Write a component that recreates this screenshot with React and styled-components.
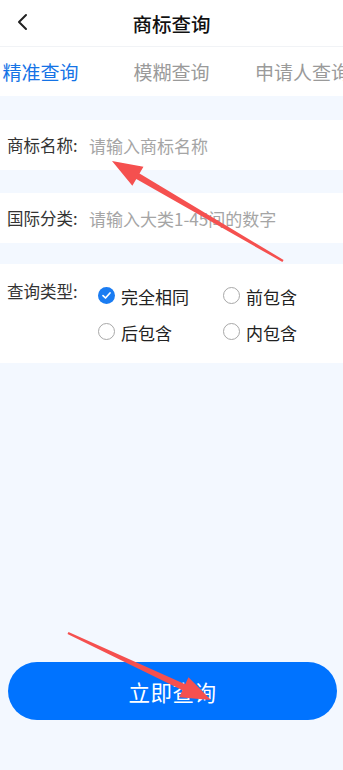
import React, { useState } from "react";
import styled, { createGlobalStyle } from "styled-components";

const GlobalStyle = createGlobalStyle`
  html, body {
    margin: 0;
    padding: 0;
    background: #f3f8ff;
    font-family: "Noto Sans CJK SC", "Noto Sans", sans-serif;
  }
`;

const Page = styled.div`
  position: relative;
  width: 343px;
  height: 770px;
  overflow: hidden;
  background: #f3f8ff;
  display: flex;
  flex-direction: column;
`;

const Header = styled.div`
  height: 46px;
  background: #fff;
  display: flex;
  align-items: center;
  justify-content: center;
  position: relative;
  border-bottom: 1px solid #f1f3f6;
`;

const Back = styled.div`
  position: absolute;
  left: 14px;
  top: 11px;
  width: 20px;
  height: 22px;
`;

const Title = styled.div`
  font-size: 19.5px;
  color: #111;
  font-weight: 500;
`;

const Tabs = styled.div`
  height: 49px;
  background: #fff;
  display: flex;
  overflow: hidden;
  margin-bottom: 24px;
`;

const TabTrack = styled.div`
  display: flex;
  margin-left: -25px;
`;

const Tab = styled.div`
  flex-shrink: 0;
  width: 131px;
  display: flex;
  align-items: center;
  justify-content: center;
  font-size: 19px;
  white-space: nowrap;
  color: ${(p) => (p.active ? "#1473e6" : "#9a9a9a")};
`;

const Row = styled.div`
  background: #fff;
  display: flex;
  align-items: ${(p) => (p.top ? "flex-start" : "center")};
  padding: ${(p) => (p.top ? "15px 0 18px 7px" : "0 0 0 7px")};
  height: ${(p) => (p.top ? "auto" : "50px")};
  margin-bottom: ${(p) => p.gap || 0}px;
`;

const Label = styled.div`
  font-size: 16.5px;
  color: #333;
  white-space: nowrap;
  width: 82px;
  flex-shrink: 0;
`;

const Input = styled.input`
  border: none;
  outline: none;
  background: transparent;
  font-family: inherit;
  font-size: 17px;
  color: #333;
  padding: 0;
  width: 250px;
  &::placeholder {
    color: #a5a5a5;
  }
`;

const Options = styled.div`
  display: grid;
  grid-template-columns: 125px 100px;
  row-gap: 11px;
  margin-left: 9px;
  margin-top: 5px;
`;

const Option = styled.div`
  display: flex;
  align-items: center;
  gap: 6px;
  font-size: 17px;
  color: #222;
`;

const Circle = styled.span`
  width: 17px;
  height: 17px;
  border-radius: 50%;
  box-sizing: border-box;
  border: ${(p) => (p.checked ? "none" : "1px solid #a8a8a8")};
  background: ${(p) => (p.checked ? "#1a7cf2" : "#fff")};
  display: flex;
  align-items: center;
  justify-content: center;
  margin-top: -3px;
`;

const Spacer = styled.div`
  flex: 1;
`;

const Button = styled.button`
  margin: 0 6px 50px 8px;
  height: 58px;
  border: none;
  border-radius: 29px;
  background: #0073ff;
  color: #fff;
  font-family: inherit;
  font-size: 21.5px;
  letter-spacing: 0.5px;
`;

const Overlay = styled.svg`
  position: absolute;
  left: 0;
  top: 0;
  pointer-events: none;
`;

const Arrow = ({ x1, y1, x2, y2 }) => {
  const dx = x2 - x1;
  const dy = y2 - y1;
  const len = Math.hypot(dx, dy);
  const ux = dx / len;
  const uy = dy / len;
  const head = 30;
  const bx = x2 - ux * head;
  const by = y2 - uy * head;
  const w = 11;
  const px = -uy;
  const py = ux;
  const tw = 1.2;
  const nw = 3.2;
  const pts = [
    [x1 + px * tw, y1 + py * tw],
    [bx + px * nw, by + py * nw],
    [bx + px * w, by + py * w],
    [x2, y2],
    [bx - px * w, by - py * w],
    [bx - px * nw, by - py * nw],
    [x1 - px * tw, y1 - py * tw],
  ]
    .map((p) => p.join(","))
    .join(" ");
  return <polygon points={pts} fill="#f5504f" />;
};

const options = ["完全相同", "前包含", "后包含", "内包含"];

export default function App() {
  const [type, setType] = useState(0);
  return (
    <>
      <GlobalStyle />
      <Page>
        <Header>
          <Back>
            <svg width="20" height="22" viewBox="0 0 20 22">
              <path
                d="M12 4 L5 11 L12 18"
                fill="none"
                stroke="#222"
                strokeWidth="2"
                strokeLinecap="round"
                strokeLinejoin="round"
              />
            </svg>
          </Back>
          <Title>商标查询</Title>
        </Header>
        <Tabs>
          <TabTrack>
            <Tab active>精准查询</Tab>
            <Tab>模糊查询</Tab>
            <Tab>申请人查询</Tab>
          </TabTrack>
        </Tabs>
        <Row gap={23}>
          <Label>商标名称:</Label>
          <Input placeholder="请输入商标名称" />
        </Row>
        <Row gap={21}>
          <Label>国际分类:</Label>
          <Input placeholder="请输入大类1-45间的数字" />
        </Row>
        <Row top>
          <Label>查询类型:</Label>
          <Options>
            {options.map((o, i) => (
              <Option key={o} onClick={() => setType(i)}>
                <Circle checked={type === i}>
                  {type === i && (
                    <svg width="11" height="11" viewBox="0 0 11 11">
                      <path
                        d="M2 5.6 L4.5 8 L9 3"
                        fill="none"
                        stroke="#fff"
                        strokeWidth="1.7"
                        strokeLinecap="round"
                        strokeLinejoin="round"
                      />
                    </svg>
                  )}
                </Circle>
                {o}
              </Option>
            ))}
          </Options>
        </Row>
        <Spacer />
        <Button>立即查询</Button>
        <Overlay width="343" height="770">
          <Arrow x1={283} y1={261} x2={112} y2={161} />
          <Arrow x1={68} y1={633} x2={211} y2={700} />
        </Overlay>
      </Page>
    </>
  );
}
